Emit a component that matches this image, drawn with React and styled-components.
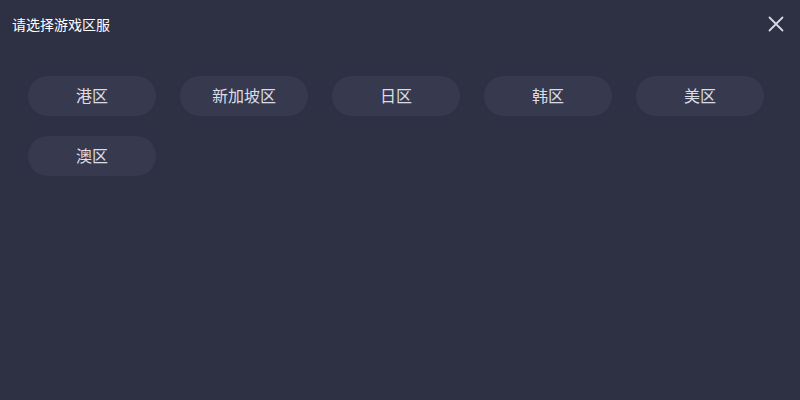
import React from 'react';
import styled, { createGlobalStyle } from 'styled-components';

const GlobalStyle = createGlobalStyle`
  html, body {
    margin: 0;
    padding: 0;
    background: #2e3044;
  }
  body {
    font-family: "Microsoft YaHei", "Noto Sans CJK SC", sans-serif;
  }
`;

const Dialog = styled.div`
  width: 800px;
  height: 400px;
  background: #2e3044;
  box-sizing: border-box;
`;

const Header = styled.div`
  display: flex;
  align-items: center;
  justify-content: space-between;
  height: 47px;
  padding: 0 14px 0 12px;
`;

const Title = styled.h1`
  margin: 0;
  font-size: 14px;
  font-weight: 400;
  color: #ffffff;
`;

const CloseButton = styled.button`
  display: flex;
  align-items: center;
  justify-content: center;
  width: 20px;
  height: 20px;
  padding: 0;
  border: none;
  background: none;
  cursor: pointer;
`;

const RegionGrid = styled.div`
  display: flex;
  flex-wrap: wrap;
  gap: 20px 24px;
  padding: 29px 28px 0;
`;

const RegionButton = styled.button`
  width: 128px;
  height: 40px;
  padding: 0 0 2px;
  border: none;
  border-radius: 20px;
  background: #373a4e;
  color: #dcdde4;
  font-family: inherit;
  font-size: 16px;
  cursor: pointer;
`;

const regions = ['港区', '新加坡区', '日区', '韩区', '美区', '澳区'];

const App = () => (
  <>
    <GlobalStyle />
    <Dialog>
      <Header>
        <Title>请选择游戏区服</Title>
        <CloseButton aria-label="关闭">
          <svg width="16" height="16" viewBox="0 0 16 16">
            <path d="M1.5 1.5 L14.5 14.5 M14.5 1.5 L1.5 14.5" stroke="#d6d7e0" strokeWidth="1.8" strokeLinecap="round" />
          </svg>
        </CloseButton>
      </Header>
      <RegionGrid>
        {regions.map((name) => (
          <RegionButton key={name}>{name}</RegionButton>
        ))}
      </RegionGrid>
    </Dialog>
  </>
);

export default App;
